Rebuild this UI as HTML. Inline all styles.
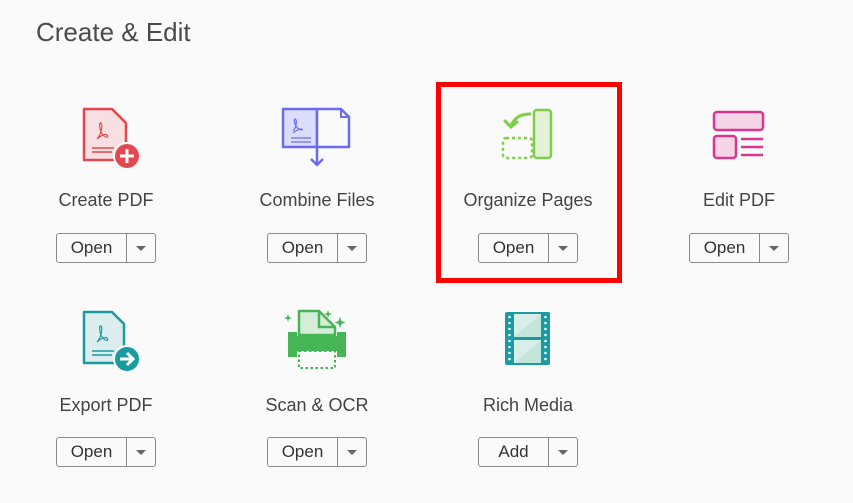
<!DOCTYPE html><html><head><style>
body{margin:0;width:853px;height:503px;background:#fafafa;font-family:"Liberation Sans",sans-serif;position:relative;overflow:hidden;color:#4a4a4a}
h1{position:absolute;left:36px;top:17px;margin:0;font-weight:normal;font-size:26px;color:#4b4b4b}
.t{position:absolute;width:210px;text-align:center;font-size:18px;color:#444}
.b{position:absolute;width:98px;height:28px;border:1px solid #8a8a8a;border-radius:3px;background:#fafafa;font-size:17px;color:#333}
.b span{position:absolute;left:0;width:69px;top:4px;text-align:center}
.b i{position:absolute;left:69px;top:0;height:28px;border-left:1px solid #8a8a8a}
.b em{position:absolute;left:79px;top:12px;border:5px solid transparent;border-top:5px solid #666;border-bottom:0}
svg{position:absolute}
.red{position:absolute;left:436px;top:82px;width:176px;height:191px;border:5px solid #f00}
</style></head><body>
<h1>Create &amp; Edit</h1>

<svg style="left:80px;top:107px" width="64" height="64" viewBox="0 0 64 64"><path d="M4 2h28l14 14v37H4z" fill="#f8e0e2" stroke="#e34850" stroke-width="2.5" stroke-linejoin="round"/><path d="M17 32c4-4 6-14 4-16s-2 8 2 12 6 2 4 0-8 2-10 4" fill="none" stroke="#e34850" stroke-width="1.2"/><path d="M12 41h22M12 45h20" stroke="#e34850" stroke-width="1.5"/><circle cx="47" cy="49" r="13" fill="#e34850" stroke="#fafafa" stroke-width="2"/><path d="M47 42v14M40 49h14" stroke="#fff" stroke-width="3"/></svg>
<svg style="left:281px;top:107px" width="72" height="64" viewBox="0 0 72 64"><path d="M2 2h34v38H2z" fill="#dcdcfb" stroke="#6b6bf2" stroke-width="2.5" stroke-linejoin="round"/><path d="M36 2h24l8 8v30H36z" fill="#fafafa" stroke="#6b6bf2" stroke-width="2.5" stroke-linejoin="round"/><path d="M60 2v8h8" fill="none" stroke="#6b6bf2" stroke-width="2"/><path d="M12 24c4-4 4-12 2-12s0 8 4 10 4 0 2 0-6 2-8 4M10 31h20M10 35h20" fill="none" stroke="#6b6bf2" stroke-width="1.2"/><path d="M36 40v17M30 52l6 6 6-6" fill="none" stroke="#6b6bf2" stroke-width="2.5" stroke-linejoin="round"/></svg>
<svg style="left:499px;top:108px" width="60" height="56" viewBox="0 0 60 56"><rect x="35" y="2" width="17" height="48" rx="3" fill="#e3f2d6" stroke="#7fce4a" stroke-width="2.5"/><rect x="4" y="30" width="29" height="20" rx="3" fill="none" stroke="#7fce4a" stroke-width="2.5" stroke-dasharray="3 3"/><path d="M31 6c-10 0-16 4-19 12M6 13l6 6 6-5" fill="none" stroke="#7fce4a" stroke-width="3" stroke-linecap="round"/></svg>
<svg style="left:712px;top:110px" width="56" height="54" viewBox="0 0 56 54"><rect x="2" y="2" width="49" height="18" rx="3" fill="#f5d4e6" stroke="#d83790" stroke-width="2.5"/><rect x="2" y="26" width="22" height="22" rx="3" fill="#f5d4e6" stroke="#d83790" stroke-width="2.5"/><path d="M29 29h22M29 37h22M29 45h22" stroke="#d83790" stroke-width="2.5"/></svg>

<svg style="left:80px;top:310px" width="64" height="64" viewBox="0 0 64 64"><path d="M4 2h28l12 12v39H4z" fill="#dcedf0" stroke="#1a9ba0" stroke-width="2.5" stroke-linejoin="round"/><path d="M17 32c4-4 6-14 4-16s-2 8 2 12 6 2 4 0-8 2-10 4" fill="none" stroke="#1a9ba0" stroke-width="1.2"/><path d="M12 41h22M12 45h20" stroke="#1a9ba0" stroke-width="1.5"/><circle cx="47" cy="49" r="13" fill="#1a9ba0" stroke="#fafafa" stroke-width="2"/><path d="M40 49h12M47 43l6 6-6 6" fill="none" stroke="#fff" stroke-width="3"/></svg>
<svg style="left:283px;top:307px" width="66" height="64" viewBox="0 0 66 64"><path d="M16 28V4h20l16 16v8z" fill="#d5edd8" stroke="#45b556" stroke-width="2.5" stroke-linejoin="round"/><path d="M36 4v16h16" fill="none" stroke="#45b556" stroke-width="2.5"/><path d="M5 25h9v4h40v-4h9v25h-9v-6H14v6H5z" fill="#45b556"/><rect x="16" y="44" width="36" height="17" fill="none" stroke="#45b556" stroke-width="2" stroke-dasharray="2.5 2.5"/><path d="M5 7l1 3 3 1-3 1-1 3-1-3-3-1 3-1zM45 3l1 3 3 1-3 1-1 3-1-3-3-1 3-1zM57 10l1.5 4 4 1.5-4 1.5-1.5 4-1.5-4-4-1.5 4-1.5z" fill="#45b556"/></svg>
<svg style="left:505px;top:312px" width="46" height="54" viewBox="0 0 46 54"><rect x="0" y="0" width="45" height="53" rx="2" fill="#1a9ba0"/><rect x="9" y="2" width="27" height="23" fill="#d8eee9"/><rect x="9" y="28" width="27" height="23" fill="#d8eee9"/><path d="M9 25L36 2v23zM9 51l27-23v23z" fill="#c3e5dc"/><g fill="#fff"><circle cx="4.5" cy="5" r="1.3"/><circle cx="4.5" cy="11" r="1.3"/><circle cx="4.5" cy="17" r="1.3"/><circle cx="4.5" cy="23" r="1.3"/><circle cx="4.5" cy="29" r="1.3"/><circle cx="4.5" cy="35" r="1.3"/><circle cx="4.5" cy="41" r="1.3"/><circle cx="4.5" cy="47" r="1.3"/><circle cx="40.5" cy="5" r="1.3"/><circle cx="40.5" cy="11" r="1.3"/><circle cx="40.5" cy="17" r="1.3"/><circle cx="40.5" cy="23" r="1.3"/><circle cx="40.5" cy="29" r="1.3"/><circle cx="40.5" cy="35" r="1.3"/><circle cx="40.5" cy="41" r="1.3"/><circle cx="40.5" cy="47" r="1.3"/></g></svg>

<div class="t" style="left:1px;top:190px">Create PDF</div>
<div class="t" style="left:212px;top:190px">Combine Files</div>
<div class="t" style="left:423px;top:190px">Organize Pages</div>
<div class="t" style="left:634px;top:190px">Edit PDF</div>
<div class="t" style="left:1px;top:395px">Export PDF</div>
<div class="t" style="left:212px;top:395px">Scan &amp; OCR</div>
<div class="t" style="left:423px;top:395px">Rich Media</div>

<div class="b" style="left:56px;top:233px"><span>Open</span><i></i><em></em></div>
<div class="b" style="left:267px;top:233px"><span>Open</span><i></i><em></em></div>
<div class="b" style="left:478px;top:233px"><span>Open</span><i></i><em></em></div>
<div class="b" style="left:689px;top:233px"><span>Open</span><i></i><em></em></div>
<div class="b" style="left:56px;top:437px"><span>Open</span><i></i><em></em></div>
<div class="b" style="left:267px;top:437px"><span>Open</span><i></i><em></em></div>
<div class="b" style="left:478px;top:437px"><span>Add</span><i></i><em></em></div>
<div class="red"></div>
</body></html>
